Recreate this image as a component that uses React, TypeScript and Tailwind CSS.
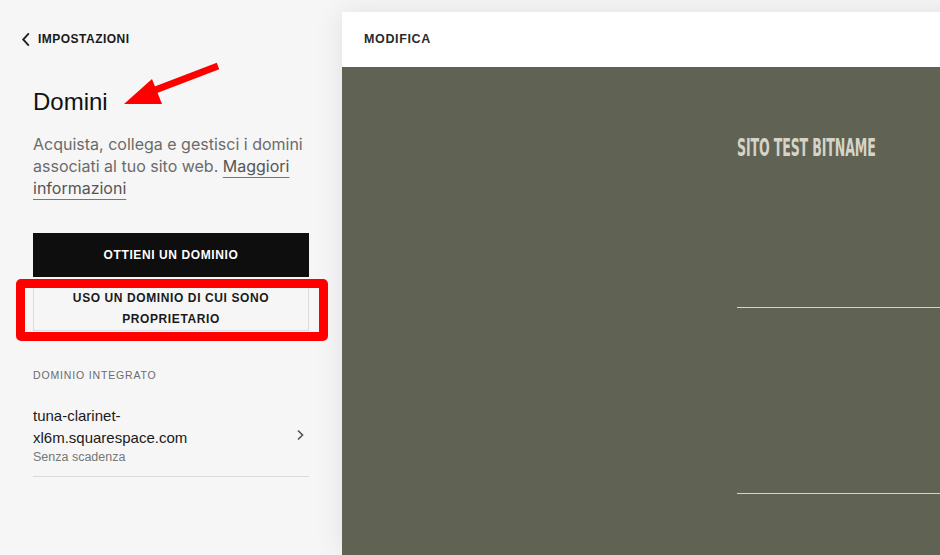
import React from "react";

function ChevronLeft({ className }: { className?: string }) {
  return (
    <svg viewBox="0 0 10 16" className={className} fill="none" stroke="currentColor" strokeWidth="2">
      <path d="M8 1.5 2 8l6 6.5" />
    </svg>
  );
}

function ChevronRight({ className }: { className?: string }) {
  return (
    <svg viewBox="0 0 8 12" className={className} fill="none" stroke="currentColor" strokeWidth="1.7">
      <path d="M2 1.5 6.5 6 2 10.5" />
    </svg>
  );
}

export default function App() {
  return (
    <div className="relative flex h-[555px] w-[940px] overflow-hidden bg-[#f6f6f6] font-['Liberation_Sans',Arial,sans-serif] text-[#111]">
      {/* Settings sidebar */}
      <div className="flex w-[342px] shrink-0 flex-col px-[33px] pt-[30px]">
        <div className="-ml-[12px] flex items-center gap-[7px]">
          <ChevronLeft className="h-[15px] w-[10px] text-[#222]" />
          <span className="text-[12px] font-bold tracking-[0.04em] text-[#1a1a1a]">IMPOSTAZIONI</span>
        </div>

        <h1 className="mt-[39px] text-[24px] leading-[30px] font-normal">Domini</h1>

        <p className="mt-[16px] font-['Inter',sans-serif] text-[16px] leading-[22px] text-[#6b6b6b]">
          Acquista, collega e gestisci i domini associati al tuo sito web.{" "}
          <span className="text-[#555] underline decoration-[#777] decoration-1 underline-offset-[5px]">
            Maggiori informazioni
          </span>
        </p>

        <div className="mt-[34px] flex flex-col gap-[10px]">
          <button className="flex h-[44px] items-center justify-center bg-[#0e0e0e] text-[12px] font-bold tracking-[0.05em] text-white">
            OTTIENI UN DOMINIO
          </button>
          <button className="border border-[#dcdcdc] text-center text-[12px] leading-[21px] font-bold tracking-[0.05em] text-[#1a1a1a]">
            USO UN DOMINIO DI CUI SONO
            <br />
            PROPRIETARIO
          </button>
        </div>

        <div className="mt-[37px] text-[10.5px] tracking-[0.08em] text-[#6b6b6b]">DOMINIO INTEGRATO</div>

        <div className="mt-[21px] flex items-center justify-between border-b border-[#dadada] pb-[11px]">
          <div>
            <div className="text-[15px] leading-[22px] text-[#1a1a1a]">
              tuna-clarinet-
              <br />
              xl6m.squarespace.com
            </div>
            <div className="text-[12.5px] leading-[16px] text-[#777]">Senza scadenza</div>
          </div>
          <ChevronRight className="mr-[5px] h-[12px] w-[8px] text-[#555]" />
        </div>
      </div>

      {/* Editor preview */}
      <div className="flex flex-1 flex-col pt-[12px]">
        <div className="flex flex-1 flex-col bg-white shadow-[0_0_28px_rgba(0,0,0,0.09)]">
          <div className="flex h-[55px] shrink-0 items-center px-[22px]">
            <span className="text-[12.5px] font-bold tracking-[0.05em] text-[#2a2a2a]">MODIFICA</span>
          </div>
          <div className="flex flex-1 flex-col bg-[#606353] pl-[395px]">
            <div className="mt-[66px] origin-left scale-x-[0.56] whitespace-nowrap font-['DejaVu_Sans_Condensed','DejaVu_Sans',sans-serif] text-[25px] leading-[30px] font-bold tracking-[-0.01em] text-[#d6d3c8]">
              SITO TEST BITNAME
            </div>
            <div className="mt-[144px] h-px bg-[#d6d3c8]" />
            <div className="mt-[185px] h-px bg-[#d6d3c8]" />
          </div>
        </div>
      </div>

      {/* Annotations */}
      <div className="pointer-events-none absolute left-[16px] top-[279px] h-[62px] w-[312px] rounded-[5px] border-[9px] border-[#ff0000]" />
      <svg className="pointer-events-none absolute left-0 top-0" width="340" height="140" viewBox="0 0 340 140">
        <line x1="218" y1="66" x2="150" y2="92" stroke="#ff0000" strokeWidth="7" />
        <polygon points="124,104 152,79 162,104" fill="#ff0000" />
      </svg>
    </div>
  );
}
